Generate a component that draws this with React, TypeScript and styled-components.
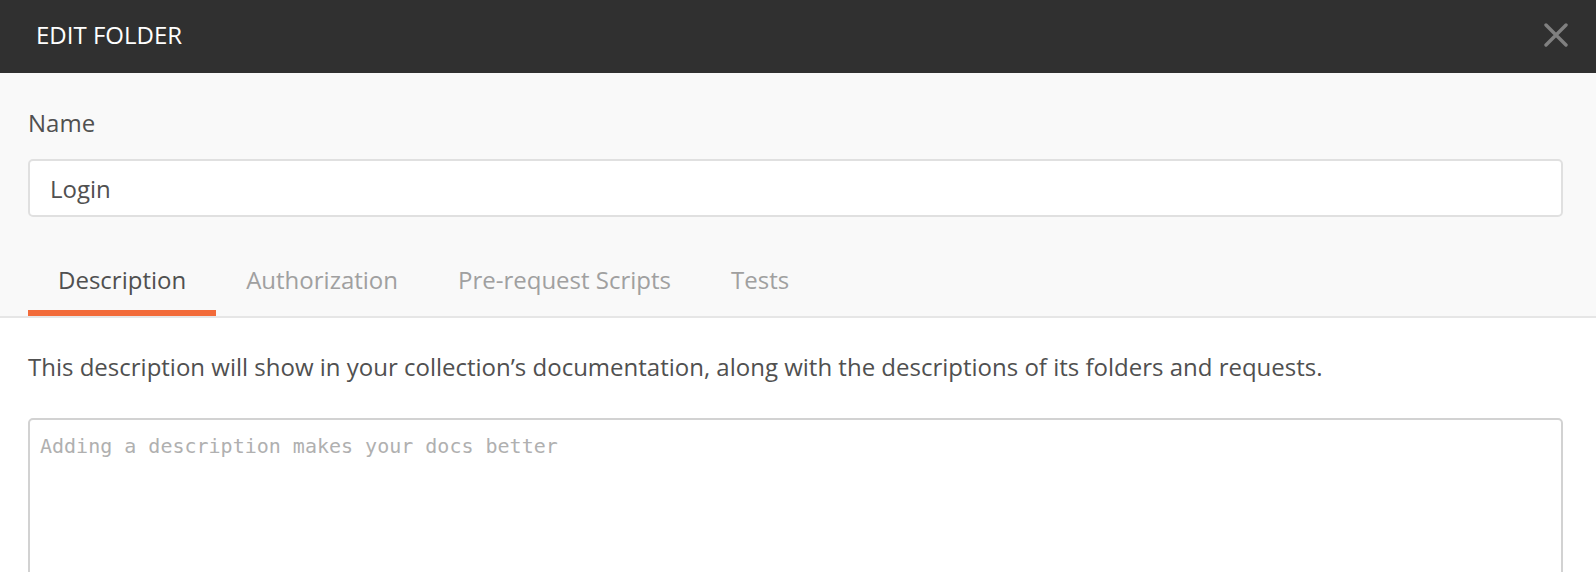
import React from 'react';
import styled, { createGlobalStyle } from 'styled-components';

const GlobalStyle = createGlobalStyle`
    body {
        margin: 0;
        font-family: "Open Sans", "Noto Sans", sans-serif;
        background: #ffffff;
    }
`;

const Header = styled('div')`
    box-sizing: border-box;
    height: 73px;
    background: #303030;
    display: flex;
    align-items: center;
    justify-content: space-between;
    padding: 0 28px 4px 36px;
`;

const HeaderTitle = styled('h4')`
    margin: 0;
    font-size: 24px;
    font-weight: normal;
    color: #ffffff;
    text-transform: uppercase;
`;

const CloseButton = styled('button')`
    width: 24px;
    height: 24px;
    padding: 0;
    border: none;
    background: transparent;
    display: flex;
    cursor: pointer;
`;

const TopSection = styled('div')`
    background: #f9f9f9;
    border-bottom: 2px solid #e6e6e6;
    padding: 33px 33px 0 28px;
`;

const Label = styled('label')`
    display: block;
    font-size: 24px;
    line-height: 33px;
    color: #505050;
`;

const NameInput = styled('input')`
    display: block;
    box-sizing: border-box;
    width: 100%;
    height: 58px;
    margin-top: 20px;
    padding: 0 20px;
    border: 2px solid #e0e0e0;
    border-radius: 5px;
    background: #ffffff;
    font-family: "Open Sans", sans-serif;
    font-size: 24px;
    color: #505050;
    outline: none;
`;

const Tabs = styled('div')`
    display: flex;
    margin-top: 32px;
`;

const Tab = styled('div')<{ active?: boolean }>`
    padding: 14px 30px 14px;
    font-size: 24px;
    line-height: 33px;
    color: ${(p) => (p.active ? '#505050' : '#a0a0a0')};
    border-bottom: 6px solid ${(p) => (p.active ? '#f26b3a' : 'transparent')};
    cursor: pointer;
`;

const Body = styled('div')`
    padding: 32px 33px 0 28px;
`;

const HelpText = styled('p')`
    margin: 0;
    font-size: 24px;
    line-height: 33px;
    color: #505050;
`;

const DescriptionArea = styled('textarea')`
    display: block;
    box-sizing: border-box;
    width: 100%;
    height: 220px;
    margin-top: 35px;
    padding: 12px 10px;
    border: 2px solid #d2d2d2;
    border-radius: 5px;
    font-family: "DejaVu Sans Mono", monospace;
    font-size: 20px;
    line-height: 28px;
    color: #505050;
    resize: none;
    outline: none;

    &::placeholder {
        color: #b0b0b0;
    }
`;

const tabs = ['Description', 'Authorization', 'Pre-request Scripts', 'Tests'];

const App = () => {
    return (
        <>
            <GlobalStyle />
            <Header>
                <HeaderTitle>Edit Folder</HeaderTitle>
                <CloseButton aria-label="Close">
                    <svg width="24" height="24" viewBox="0 0 24 24">
                        <path d="M2 2 L22 22 M22 2 L2 22" stroke="#808080" strokeWidth="3.4" strokeLinecap="round" />
                    </svg>
                </CloseButton>
            </Header>
            <TopSection>
                <Label>Name</Label>
                <NameInput defaultValue="Login" />
                <Tabs>
                    {tabs.map((tab, i) => (
                        <Tab key={tab} active={i === 0}>{tab}</Tab>
                    ))}
                </Tabs>
            </TopSection>
            <Body>
                <HelpText>
                    This description will show in your collection’s documentation, along with the descriptions of its folders and requests.
                </HelpText>
                <DescriptionArea placeholder="Adding a description makes your docs better" />
            </Body>
        </>
    );
}

export default App;
